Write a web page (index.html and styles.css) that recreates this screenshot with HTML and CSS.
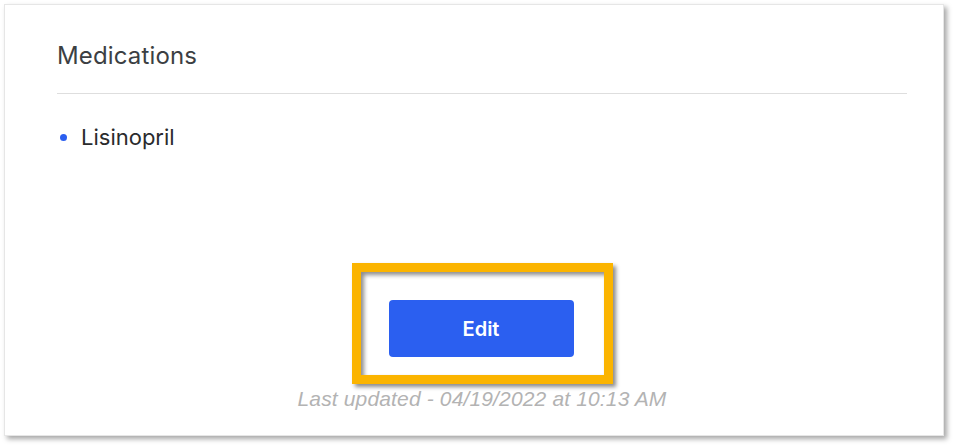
FILE: index.html
```html
<!DOCTYPE html>
<html lang="en">
<head>
<meta charset="utf-8">
<title>Medications</title>
<link rel="stylesheet" href="styles.css">
</head>
<body>
<div class="page">
  <section class="card">
    <h2 class="card-title">Medications</h2>
    <hr class="divider">
    <ul class="med-list">
      <li class="med-item">Lisinopril</li>
    </ul>
    <div class="actions">
      <div class="highlight">
        <button class="edit-btn" type="button">Edit</button>
      </div>
      <p class="updated">Last updated - 04/19/2022 at 10:13 AM</p>
    </div>
  </section>
</div>
</body>
</html>
```

FILE: styles.css
```css
html, body {
  margin: 0;
  padding: 0;
  background: #ffffff;
}
body {
  width: 956px;
  height: 448px;
  overflow: hidden;
  font-family: Inter, "Noto Sans", "Liberation Sans", sans-serif;
}
.page {
  padding: 4px 0 0 4px;
}
.card {
  box-sizing: border-box;
  width: 940px;
  height: 432px;
  background: #ffffff;
  border: 1px solid #e6e6e6;
  box-shadow: 3px 3px 5px rgba(0, 0, 0, 0.35);
  padding: 0 36px 0 52px;
  display: flex;
  flex-direction: column;
}
.card-title {
  margin: 37px 0 0 0;
  font-size: 24px;
  line-height: 28px;
  font-weight: 400;
  letter-spacing: 0.15px;
  color: #3c3f43;
}
.divider {
  margin: 23px 0 0 0;
  border: 0;
  height: 1px;
  background: #dedede;
}
.med-list {
  list-style: none;
  margin: 30px 0 0 0;
  padding: 0;
}
.med-item {
  display: flex;
  align-items: center;
  gap: 14px;
  font-size: 22px;
  line-height: 26px;
  color: #2a2b2d;
  padding-left: 3px;
}
.med-item::before {
  content: "";
  width: 7px;
  height: 7px;
  border-radius: 50%;
  background: #2b5ff0;
}
.actions {
  margin-top: auto;
  display: flex;
  flex-direction: column;
  align-items: center;
  padding-bottom: 24px;
}
.highlight {
  box-sizing: border-box;
  width: 261px;
  height: 121px;
  border: 9px solid #fbb400;
  box-shadow: 3px 3px 4px rgba(0, 0, 0, 0.45), inset 3px 3px 4px rgba(0, 0, 0, 0.45);
  display: flex;
  align-items: flex-start;
  justify-content: center;
  padding-top: 28px;
}
.edit-btn {
  width: 185px;
  height: 57px;
  border: 0;
  border-radius: 4px;
  background: #2b5ff0;
  color: #ffffff;
  font-family: Inter, "Noto Sans", sans-serif;
  font-size: 20px;
  font-weight: 600;
  margin-right: 2px;
}
.updated {
  margin: 3px 0 0 0;
  font-family: "Liberation Sans", Arial, sans-serif;
  font-style: italic;
  font-size: 21px;
  line-height: 24px;
  letter-spacing: 0.15px;
  color: #b3b3b3;
}
```
